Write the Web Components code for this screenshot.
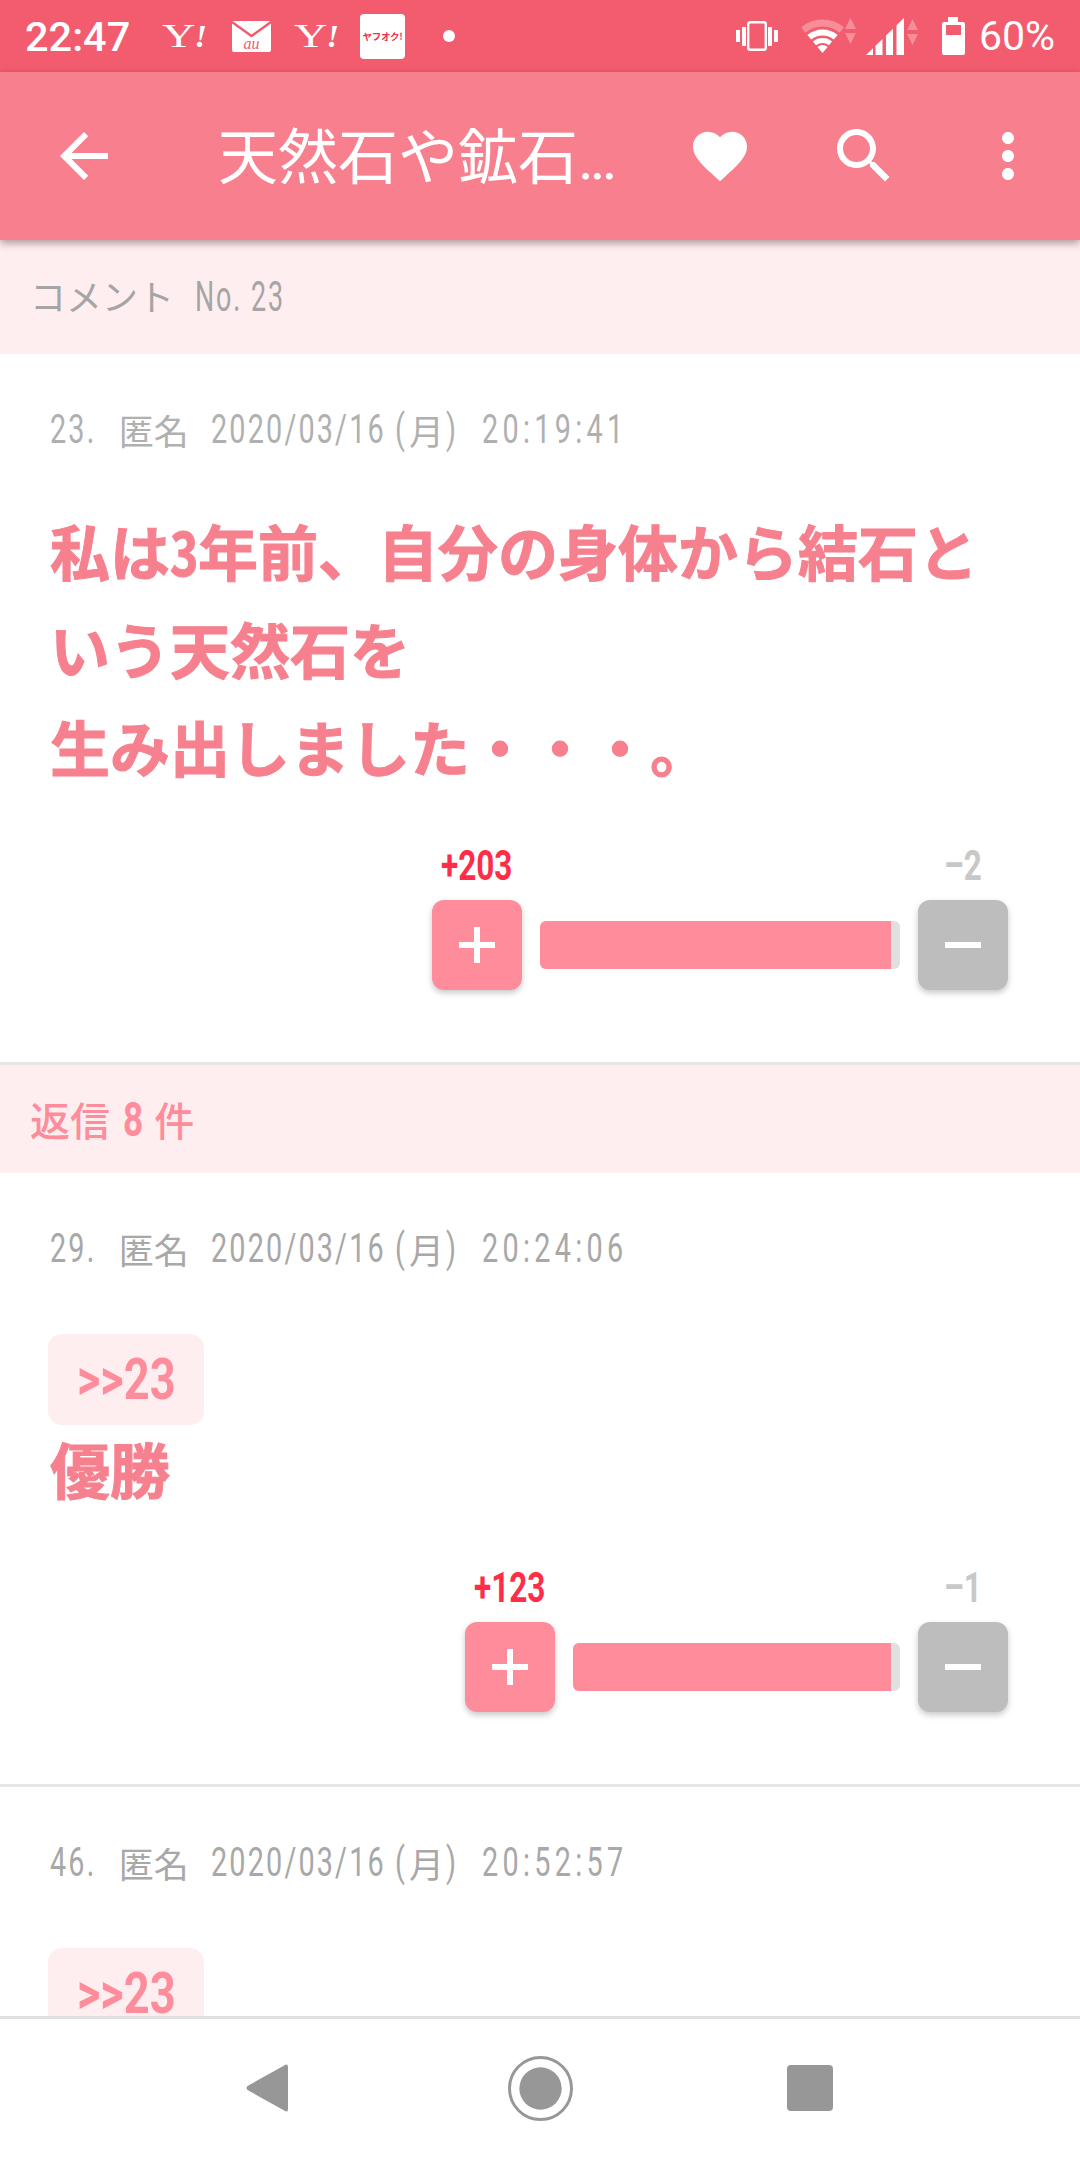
<!DOCTYPE html>
<html lang="ja">
<head>
<meta charset="utf-8">
<title>コメント No.23</title>
<style>
    html, body { margin: 0; padding: 0; background: #fff; }
    body { width: 1080px; height: 2160px; overflow: hidden; display: flex; flex-direction: column; font-family: "Noto Sans CJK JP", "Noto Sans", sans-serif; }
    main { flex: 1; min-height: 0; overflow: hidden; display: block; }
    .no { font: 400 42px/40px Roboto, sans-serif; letter-spacing: 3px; margin-left: 21px; }
    .count { font: 700 49px/40px Roboto, sans-serif; margin: 0 11px 0 13px; }
</style>
</head>
<body>
<status-bar></status-bar>
<app-toolbar title="天然石や鉱石"></app-toolbar>
<main>
    <section-bar>コメント<narrow-text class="no" scale="0.64">No. 23</narrow-text></section-bar>
    <comment-item no="23" date="2020/03/16" time="20:19:41" plus="+203" minus="–2" bar="360" tone="#b0b0b0">
        <div class="big">私は<narrow-text scale="0.8">3</narrow-text>年前、自分の身体から結石と<br>いう天然石を<br>生み出しました・・・。</div>
    </comment-item>
    <section-bar accent>返信<narrow-text class="count">8</narrow-text>件</section-bar>
    <comment-item no="29" date="2020/03/16" time="20:24:06" plus="+123" minus="–1" bar="327" tone="#a8a8a8">
        <reply-chip>&gt;&gt;23</reply-chip>
        <div class="big">優勝</div>
    </comment-item>
    <comment-item no="46" date="2020/03/16" time="20:52:57" tone="#a8a8a8" open>
        <reply-chip>&gt;&gt;23</reply-chip>
    </comment-item>
</main>
<nav-bar></nav-bar>

<script>
// condensed latin text: no narrow family is installed, so squeeze Roboto and give the box the squeezed width
class NarrowText extends HTMLElement {
    constructor() {
        super();
        this.attachShadow({ mode: 'open' });
    }

    connectedCallback() {
        const scale = parseFloat(this.getAttribute('scale')) || 0.72;
        this.shadowRoot.innerHTML = `
            <style>
                :host { display: inline-block; white-space: nowrap; }
                span { display: inline-block; transform-origin: 0 50%; transform: scaleX(${scale}); }
            </style>
            <span><slot></slot></span>
        `;
        this.style.width = (this.shadowRoot.querySelector('span').offsetWidth * scale) + 'px';
    }
}

class StatusBar extends HTMLElement {
    constructor() {
        super();
        this.attachShadow({ mode: 'open' });
    }

    connectedCallback() {
        this.render();
    }

    render() {
        const yahoo = `<span class="yahoo"><span class="y">Y</span><span class="ex">!</span></span>`;
        this.shadowRoot.innerHTML = `
            <style>
                :host { display: flex; align-items: center; height: 72px; flex: none; background: #f25c6e; color: #fff; padding: 0 25px; box-sizing: border-box; font-family: Roboto, sans-serif; position: relative; }
                .time { font-size: 41.5px; font-weight: 500; width: 137px; flex: none; }
                .yahoo { width: 45px; height: 30px; display: flex; align-items: center; flex: none; font-family: "Liberation Serif", serif; line-height: 30px; }
                .y { font-size: 34px; display: inline-block; width: 33px; transform-origin: 0 50%; transform: scaleX(1.36); }
                .ex { font-size: 32px; font-weight: 700; font-style: italic; }
                .mail { margin: 0 23px 0 25px; flex: none; display: block; overflow: visible; }
                .auction { width: 45px; height: 45px; margin-left: 21px; flex: none; background: #fff; border-radius: 4px; color: #f0304a; font: 700 9.5px/45px "Noto Sans CJK JP", sans-serif; text-align: center; white-space: nowrap; letter-spacing: -0.3px; }
                .dot { width: 12px; height: 12px; border-radius: 50%; background: #fff; margin-left: 38px; flex: none; }
                .right { margin-left: auto; display: flex; align-items: center; }
                svg { display: block; flex: none; }
                .pct { font-size: 41px; margin-left: 14px; }
            </style>
            <span class="time">22:47</span>
            ${yahoo}
            <svg class="mail" width="39" height="31" viewBox="0 0 39 31">
                <rect width="39" height="31" rx="2" fill="#fff"/>
                <path d="M0 1 L19.5 15 L39 1" fill="none" stroke="#f25c6e" stroke-width="2.5"/>
                <text x="19.5" y="28" text-anchor="middle" font-family="Liberation Serif" font-style="italic" font-size="16" fill="#f25c6e">au</text>
            </svg>
            ${yahoo}
            <span class="auction">ヤフオク!</span>
            <span class="dot"></span>
            <div class="right">
                <svg width="42" height="30" viewBox="0 0 42 30" fill="#fff" style="margin-right:24px">
                    <rect x="0" y="9" width="4" height="12"/><rect x="6" y="6" width="4" height="19"/>
                    <rect x="12.2" y="1.2" width="17.6" height="27.6" rx="2" fill="none" stroke="#fff" stroke-width="2.4"/>
                    <rect x="32" y="6" width="4" height="19"/><rect x="38" y="9" width="4" height="12"/>
                </svg>
                <svg width="54" height="36" viewBox="0 0 54 36" style="margin-right:10px">
                    <path d="M1.2 12 A30 30 0 0 1 39.8 12" fill="none" stroke="#fff" stroke-opacity=".3" stroke-width="7"/>
                    <path d="M7.3 19.3 A20.5 20.5 0 0 1 33.7 19.3" fill="none" stroke="#fff" stroke-width="6"/>
                    <path d="M12.5 25.4 A12.5 12.5 0 0 1 28.5 25.4" fill="none" stroke="#fff" stroke-width="5"/>
                    <path d="M20.5 35 L15.4 28.9 A8 8 0 0 1 25.6 28.9 Z" fill="#fff"/>
                    <path d="M48.5 0 L54 11 L43 11 Z M43 15 L54 15 L48.5 26 Z" fill="#fff" fill-opacity=".3"/>
                </svg>
                <svg width="52" height="37" viewBox="0 0 52 37" fill="#fff" style="margin-right:24px">
                    <path d="M0 37 L7 30.2 V37 Z M9.5 27.8 L16.5 20.9 V37 H9.5 Z M20 17.5 L27 10.7 V37 H20 Z M30.5 7.3 L38 0 V37 H30.5 Z"/>
                    <path d="M46.5 1 L52 12 L41 12 Z M41 16 L52 16 L46.5 27 Z" fill-opacity=".3"/>
                </svg>
                <svg width="23" height="38" viewBox="0 0 23 38">
                    <path d="M6 0 H16 V5 H21 A2 2 0 0 1 23 7 V36 A2 2 0 0 1 21 38 H2 A2 2 0 0 1 0 36 V7 A2 2 0 0 1 2 5 H6 Z" fill="#fff"/>
                    <rect x="4" y="8" width="15" height="10" fill="#f25c6e"/>
                </svg>
                <span class="pct">60%</span>
            </div>
        `;
    }
}
customElements.define('status-bar', StatusBar);

class AppToolbar extends HTMLElement {
    constructor() {
        super();
        this.attachShadow({ mode: 'open' });
    }

    connectedCallback() {
        this.render();
    }

    render() {
        this.shadowRoot.innerHTML = `
            <style>
                :host { display: flex; align-items: center; flex: none; height: 168px; padding: 0 36px 0 48px; box-sizing: border-box; background: #f8808e; color: #fff; box-shadow: 0 3px 8px rgba(70, 40, 45, .45); position: relative; z-index: 2; }
                .title { font: 400 60px/72px "Noto Sans CJK JP", sans-serif; margin-left: 98px; width: 430px; white-space: nowrap; flex: none; }
                .dots { font-family: Roboto, sans-serif; letter-spacing: -4px; }
                svg { width: 72px; height: 72px; display: block; flex: none; fill: #fff; }
                .heart { margin-left: 36px; }
                .search { margin-left: 72px; }
                .more { margin-left: 72px; }
            </style>
            <svg viewBox="0 0 24 24"><path d="M20 11H7.83l5.59-5.59L12 4l-8 8 8 8 1.41-1.41L7.83 13H20v-2z"/></svg>
            <span class="title">${this.getAttribute('title')}<span class="dots">...</span></span>
            <svg class="heart" viewBox="0 0 24 24"><path transform="translate(12 12) scale(.9) translate(-12 -12)" d="M12 21.35l-1.45-1.32C5.4 15.36 2 12.28 2 8.5 2 5.42 4.42 3 7.5 3c1.74 0 3.41.81 4.5 2.09C13.09 3.81 14.76 3 16.5 3 19.58 3 22 5.42 22 8.5c0 3.78-3.4 6.86-8.55 11.54L12 21.35z"/></svg>
            <svg class="search" viewBox="0 0 24 24"><path d="M15.5 14h-.79l-.28-.27C15.41 12.59 16 11.11 16 9.5 16 5.91 13.09 3 9.5 3S3 5.91 3 9.5 5.91 16 9.5 16c1.61 0 3.09-.59 4.23-1.57l.27.28v.79l5 4.99L20.49 19l-4.99-5zm-6 0C7.01 14 5 11.99 5 9.5S7.01 5 9.5 5 14 7.01 14 9.5 11.99 14 9.5 14z"/></svg>
            <svg class="more" viewBox="0 0 24 24"><path d="M12 8c1.1 0 2-.9 2-2s-.9-2-2-2-2 .9-2 2 .9 2 2 2zm0 2c-1.1 0-2 .9-2 2s.9 2 2 2 2-.9 2-2-.9-2-2-2zm0 6c-1.1 0-2 .9-2 2s.9 2 2 2 2-.9 2-2-.9-2-2-2z"/></svg>
        `;
    }
}
customElements.define('app-toolbar', AppToolbar);

class SectionBar extends HTMLElement {
    constructor() {
        super();
        this.attachShadow({ mode: 'open' });
        this.shadowRoot.innerHTML = `
            <style>
                :host { display: block; height: 114px; padding: 35px 30px 0; box-sizing: border-box; background: #ffeef0; color: #a5a5a5; font: 400 36px/40px "Noto Sans CJK JP", sans-serif; white-space: nowrap; }
                :host([accent]) { height: 108px; padding-top: 34px; color: #ff8c9a; font-size: 40px; font-weight: 500; }
            </style>
            <slot></slot>
        `;
    }
}
customElements.define('section-bar', SectionBar);

class ReplyChip extends HTMLElement {
    constructor() {
        super();
        this.attachShadow({ mode: 'open' });
        this.shadowRoot.innerHTML = `
            <style>
                :host { display: flex; align-items: center; justify-content: center; width: 156px; height: 91px; margin-left: -2px; background: #ffeef0; border-radius: 14px; color: #ff8c9a; font: 700 58px/91px Roboto, sans-serif; }
            </style>
            <narrow-text scale="0.78"><slot></slot></narrow-text>
        `;
    }
}
customElements.define('reply-chip', ReplyChip);

class VoteRow extends HTMLElement {
    constructor() {
        super();
        this.attachShadow({ mode: 'open' });
    }

    connectedCallback() {
        this.render();
    }

    render() {
        const plus = this.getAttribute('plus');
        const minus = this.getAttribute('minus');
        const bar = this.getAttribute('bar');
        this.shadowRoot.innerHTML = `
            <style>
                :host { display: flex; justify-content: flex-end; align-items: flex-end; gap: 18px; }
                .vote { width: 90px; display: flex; flex-direction: column; align-items: center; gap: 14px; }
                .num { font: 700 42px/40px Roboto, sans-serif; color: #ff2d48; }
                .num.down { color: #c8c8c8; }
                .btn { width: 90px; height: 90px; border-radius: 12px; background: #ff8c9a; box-shadow: 0 3px 6px rgba(0,0,0,.22); display: flex; align-items: center; justify-content: center; }
                .btn.down { background: #bdbdbd; }
                svg { width: 36px; height: 36px; display: block; }
                .bar { width: ${bar}px; height: 48px; margin-bottom: 21px; border-radius: 6px; background: #e0e0e0; overflow: hidden; }
                .fill { height: 100%; width: calc(100% - 9px); background: #ff8c9a; }
            </style>
            <div class="vote">
                <narrow-text class="num" scale="0.75">${plus}</narrow-text>
                <div class="btn"><svg viewBox="0 0 36 36" fill="#fff"><rect x="15" width="6" height="36"/><rect y="15" width="36" height="6"/></svg></div>
            </div>
            <div class="bar"><div class="fill"></div></div>
            <div class="vote">
                <narrow-text class="num down" scale="0.75">${minus}</narrow-text>
                <div class="btn down"><svg viewBox="0 0 36 36" fill="#fff"><rect y="15" width="36" height="6"/></svg></div>
            </div>
        `;
    }
}
customElements.define('vote-row', VoteRow);

class CommentItem extends HTMLElement {
    constructor() {
        super();
        this.attachShadow({ mode: 'open' });
    }

    connectedCallback() {
        this.render();
    }

    render() {
        const no = this.getAttribute('no');
        const open = this.hasAttribute('open');
        const vote = open ? '' : `<vote-row plus="${this.getAttribute('plus')}" minus="${this.getAttribute('minus')}" bar="${this.getAttribute('bar')}"></vote-row>`;
        this.shadowRoot.innerHTML = `
            <style>
                :host { display: block; padding: 58px 72px 72px 50px; background: #fff; border-bottom: 3px solid #e6e6e6; color: ${this.getAttribute('tone')}; }
                .meta { display: flex; align-items: center; height: 36px; font: 400 40px/36px Roboto, sans-serif; letter-spacing: 3px; white-space: nowrap; }
                .kanji { font: 400 35px/36px "Noto Sans CJK JP", sans-serif; letter-spacing: 0; }
                .name { margin: 0 22px 0 22px; }
                .paren { margin-left: 9px; }
                .moon { margin: 0 2px; }
                .time { letter-spacing: 6px; margin-left: 24px; }
                .body { padding-top: 56px; }
                ::slotted(.big) { font: 700 60px/98px "Noto Sans CJK JP", sans-serif; color: #f6808e; white-space: nowrap; -webkit-text-stroke: 1px #f6808e; margin-top: -3px; }
                ::slotted(reply-chip) { margin-top: 11px; margin-bottom: -6px; }
                vote-row { margin-top: 51px; }
            </style>
            <div class="meta">
                <narrow-text>${no}.</narrow-text>
                <span class="kanji name">匿名</span>
                <narrow-text>${this.getAttribute('date')}</narrow-text>
                <narrow-text class="paren">(</narrow-text><span class="kanji moon">月</span><narrow-text>)</narrow-text>
                <narrow-text class="time">${this.getAttribute('time')}</narrow-text>
            </div>
            <div class="body"><slot></slot></div>
            ${vote}
        `;
    }
}
customElements.define('comment-item', CommentItem);

class NavBar extends HTMLElement {
    constructor() {
        super();
        this.attachShadow({ mode: 'open' });
        this.shadowRoot.innerHTML = `
            <style>
                :host { display: flex; flex: none; height: 144px; box-sizing: border-box; border-top: 3px solid #e0e0e0; background: #fff; align-items: center; padding: 0 0 3px 246px; position: relative; z-index: 2; }
                svg { display: block; flex: none; }
            </style>
            <svg width="42" height="48" viewBox="0 0 42 48" fill="#979797" style="margin-right:220px"><path d="M40 0.5 Q42 0 42 3 V45 Q42 48 40 47.5 L1.5 26 Q-0.5 24 1.5 22 Z"/></svg>
            <svg width="65" height="65" viewBox="0 0 66 66"><circle cx="33" cy="33" r="31.5" fill="none" stroke="#979797" stroke-width="3"/><circle cx="33" cy="33" r="21.5" fill="#979797"/></svg>
            <svg width="46" height="46" viewBox="0 0 46 46" style="margin-left:214px"><rect width="46" height="46" rx="4" fill="#979797"/></svg>
        `;
    }
}
customElements.define('nav-bar', NavBar);

// last, so every inherited font is in place when the width is measured
customElements.define('narrow-text', NarrowText);
</script>
</body>
</html>
